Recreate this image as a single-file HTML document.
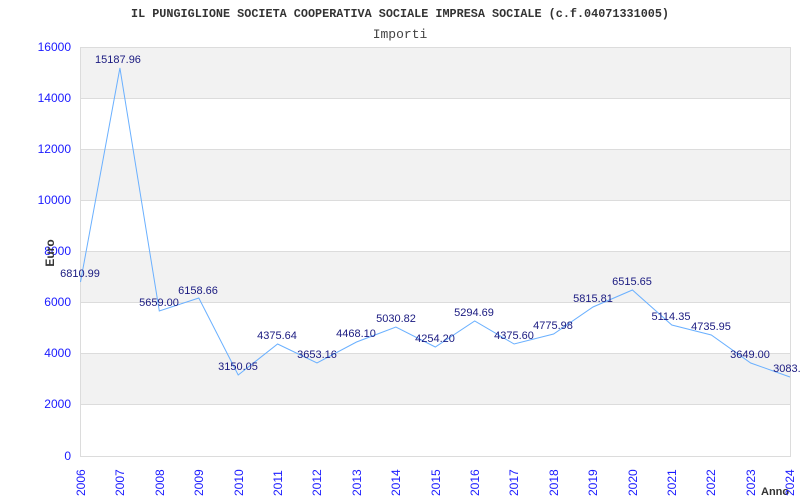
<!DOCTYPE html>
<html><head><meta charset="utf-8"><style>
html,body{margin:0;padding:0;background:#fff;}
svg{display:block;}
</style></head><body>
<svg width="800" height="500" xmlns="http://www.w3.org/2000/svg">
<rect width="800" height="500" fill="#fff"/>
<text x="400" y="17" text-anchor="middle" font-family="Liberation Mono, monospace" font-weight="bold" font-size="11.8" fill="#333">IL PUNGIGLIONE SOCIETA COOPERATIVA SOCIALE IMPRESA SOCIALE (c.f.04071331005)</text>
<text x="400" y="38" text-anchor="middle" font-family="Liberation Mono, monospace" font-size="13" fill="#444">Importi</text>
<g fill="#f2f2f2">
<rect x="80" y="47" width="710" height="51"/>
<rect x="80" y="149" width="710" height="51"/>
<rect x="80" y="251" width="710" height="51"/>
<rect x="80" y="353" width="710" height="51"/>
</g>
<g stroke="#dcdcdc" stroke-width="1">
<line x1="80" y1="47.5" x2="790" y2="47.5"/>
<line x1="80" y1="98.5" x2="790" y2="98.5"/>
<line x1="80" y1="149.5" x2="790" y2="149.5"/>
<line x1="80" y1="200.5" x2="790" y2="200.5"/>
<line x1="80" y1="251.5" x2="790" y2="251.5"/>
<line x1="80" y1="302.5" x2="790" y2="302.5"/>
<line x1="80" y1="353.5" x2="790" y2="353.5"/>
<line x1="80" y1="404.5" x2="790" y2="404.5"/>
<line x1="80" y1="456.5" x2="791" y2="456.5"/>
<line x1="80.5" y1="47" x2="80.5" y2="457"/>
<line x1="790.5" y1="47" x2="790.5" y2="457"/>
</g>
<g font-family="Liberation Sans, sans-serif" font-size="12" fill="#1a1aff" text-anchor="end">
<text x="71" y="51">16000</text>
<text x="71" y="102">14000</text>
<text x="71" y="153">12000</text>
<text x="71" y="204">10000</text>
<text x="71" y="255">8000</text>
<text x="71" y="306">6000</text>
<text x="71" y="357">4000</text>
<text x="71" y="408">2000</text>
<text x="71" y="460">0</text>
</g>
<text transform="translate(54,253) rotate(-90)" text-anchor="middle" font-family="Liberation Sans, sans-serif" font-weight="bold" font-size="12" fill="#333">Euro</text>
<text x="761" y="495" font-family="Liberation Sans, sans-serif" font-weight="bold" font-size="11" fill="#333">Anno</text>
<g font-family="Liberation Sans, sans-serif" font-size="12" fill="#1a1aff">
<text transform="translate(85,496) rotate(-90)">2006</text>
<text transform="translate(124,496) rotate(-90)">2007</text>
<text transform="translate(164,496) rotate(-90)">2008</text>
<text transform="translate(203,496) rotate(-90)">2009</text>
<text transform="translate(243,496) rotate(-90)">2010</text>
<text transform="translate(282,496) rotate(-90)">2011</text>
<text transform="translate(321,496) rotate(-90)">2012</text>
<text transform="translate(361,496) rotate(-90)">2013</text>
<text transform="translate(400,496) rotate(-90)">2014</text>
<text transform="translate(440,496) rotate(-90)">2015</text>
<text transform="translate(479,496) rotate(-90)">2016</text>
<text transform="translate(518,496) rotate(-90)">2017</text>
<text transform="translate(558,496) rotate(-90)">2018</text>
<text transform="translate(597,496) rotate(-90)">2019</text>
<text transform="translate(637,496) rotate(-90)">2020</text>
<text transform="translate(676,496) rotate(-90)">2021</text>
<text transform="translate(715,496) rotate(-90)">2022</text>
<text transform="translate(755,496) rotate(-90)">2023</text>
<text transform="translate(794,496) rotate(-90)">2024</text>
</g>
<polyline fill="none" stroke="#6ab0ff" stroke-width="1" points="80.5,282 119.9,68 159.3,311 198.8,298 238.2,375 277.6,344 317,363 356.5,342 395.9,327 435.3,347 474.7,321 514.1,344 553.6,334 593,307 632.4,290 671.8,325 711.3,335 750.7,363 790,377"/>
<g font-family="Liberation Sans, sans-serif" font-size="11" fill="#1a1a80" text-anchor="middle">
<text x="80" y="277">6810.99</text>
<text x="118" y="63">15187.96</text>
<text x="159" y="306">5659.00</text>
<text x="198" y="294">6158.66</text>
<text x="238" y="370">3150.05</text>
<text x="277" y="339">4375.64</text>
<text x="317" y="358">3653.16</text>
<text x="356" y="337">4468.10</text>
<text x="396" y="322">5030.82</text>
<text x="435" y="342">4254.20</text>
<text x="474" y="316">5294.69</text>
<text x="514" y="339">4375.60</text>
<text x="553" y="329">4775.98</text>
<text x="593" y="302">5815.81</text>
<text x="632" y="285">6515.65</text>
<text x="671" y="320">5114.35</text>
<text x="711" y="330">4735.95</text>
<text x="750" y="358">3649.00</text>
<text x="790" y="372">3083.5</text>
</g>
</svg>
</body></html>
